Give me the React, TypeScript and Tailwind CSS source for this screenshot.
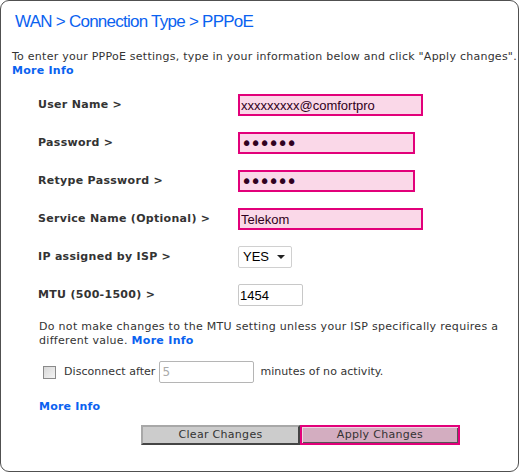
import { ChangeEvent, useState } from "react";

const labelCls = "text-[11px] font-bold text-[#333] tracking-[0.3px]";
const pinkInput =
  "h-[22px] border-2 border-[#e2007a] bg-[#fad8e8] px-[1px] text-[13px] text-[#300020] outline-none";

function Row({ label, children }: { label: string; children: React.ReactNode }) {
  return (
    <div className="flex h-[38px] items-center">
      <div className={`w-[200px] ${labelCls}`}>{label}</div>
      {children}
    </div>
  );
}

export default function App() {
  const [user, setUser] = useState("xxxxxxxxx@comfortpro");
  const [service, setService] = useState("Telekom");
  const [mtu, setMtu] = useState("1454");
  const [idle, setIdle] = useState(false);

  return (
    <div
      className="h-[472px] w-[519px] rounded-[9px] border border-[#505050] bg-white text-[#333]"
      style={{ fontFamily: "'DejaVu Sans', Verdana, sans-serif" }}
    >
      <h1
        className="pl-[14px] pt-[10px] text-[17px] leading-[22px] tracking-[-0.75px] text-[#0a62f0]"
        style={{ fontFamily: "'Liberation Sans', Arial, sans-serif" }}
      >
        WAN &gt; Connection Type &gt; PPPoE
      </h1>

      <p className="mt-[17px] pl-[11px] text-[11px] leading-[14px] tracking-[0.25px]">
        To enter your PPPoE settings, type in your information below and click "Apply changes".
        <br />
        <a href="#" className="font-bold text-[#0a62f0]">More Info</a>
      </p>

      <div className="mt-[8px] pl-[37px]">
        <Row label="User Name >">
          <input
            className={`w-[185px] ${pinkInput}`}
            style={{ fontFamily: "'Liberation Sans', Arial, sans-serif" }}
            value={user}
            onChange={(e: ChangeEvent<HTMLInputElement>) => setUser(e.target.value)}
          />
        </Row>
        <Row label="Password >">
          <input type="password" className={`w-[177px] ${pinkInput} text-[19px] tracking-[-2.2px] text-[#200010]`} defaultValue="secret" />
        </Row>
        <Row label="Retype Password >">
          <input type="password" className={`w-[177px] ${pinkInput} text-[19px] tracking-[-2.2px] text-[#200010]`} defaultValue="secret" />
        </Row>
        <Row label="Service Name (Optional) >">
          <input
            className={`w-[185px] ${pinkInput}`}
            style={{ fontFamily: "'Liberation Sans', Arial, sans-serif" }}
            value={service}
            onChange={(e: ChangeEvent<HTMLInputElement>) => setService(e.target.value)}
          />
        </Row>
        <Row label="IP assigned by ISP >">
          <div
            className="flex h-[22px] w-[54px] items-center justify-between rounded-[2px] border border-[#d0d0d0] bg-white pl-[4px] pr-[6px] text-[13px] text-black"
            style={{ fontFamily: "'Liberation Sans', Arial, sans-serif" }}
          >
            <span>YES</span>
            <svg width="8" height="4" viewBox="0 0 8 4">
              <path d="M0 0h8L4 4z" fill="#222" />
            </svg>
          </div>
        </Row>
        <Row label="MTU (500-1500) >">
          <input
            className="h-[22px] w-[65px] rounded-[2px] border border-[#c8c8c8] px-[1px] text-[13px] text-black outline-none"
            style={{ fontFamily: "'Liberation Sans', Arial, sans-serif" }}
            value={mtu}
            onChange={(e: ChangeEvent<HTMLInputElement>) => setMtu(e.target.value)}
          />
        </Row>
      </div>

      <p className="mt-[6px] pl-[38px] pr-[10px] text-[11px] leading-[14px] tracking-[0.3px]">
        Do not make changes to the MTU setting unless your ISP specifically requires a different value.{" "}
        <a href="#" className="font-bold text-[#0a62f0]">More Info</a>
      </p>

      <div className="mt-[13px] flex items-center pl-[42px] text-[11px] tracking-[0.05px]">
        <button
          onClick={() => setIdle(!idle)}
          className="h-[13px] w-[13px] border border-[#8a8a8a] bg-gradient-to-br from-[#d8d8d8] to-[#f4f4f4]"
        />
        <span className="ml-[8px]">Disconnect after</span>
        <input
          disabled={!idle}
          defaultValue="5"
          className="ml-[4px] h-[22px] w-[95px] rounded-[2px] border border-[#b5b5b5] bg-white px-[2px] text-[12px] text-[#aaa] outline-none"
        />
        <span className="ml-[6px]">minutes of no activity.</span>
      </div>

      <a href="#" className="mt-[16px] block w-fit pl-[38px] text-[11px] font-bold tracking-[0.2px] text-[#0a62f0]">
        More Info
      </a>

      <div className="mt-[9px] flex pl-[140px] text-[11px] tracking-[0.3px]">
        <button className="h-[20px] w-[159px] border-2 border-t-[#a8a8a8] border-l-[#a8a8a8] border-b-[#444] border-r-[#444] bg-[#cccccc] text-[#333]">
          Clear Changes
        </button>
        <button className="h-[20px] w-[160px] border-2 border-[#e2007a] bg-[#d3adc0] text-[#333] shadow-[inset_1px_1px_0_#eed8e2,inset_-1px_-1px_0_#555]">
          Apply Changes
        </button>
      </div>
    </div>
  );
}
